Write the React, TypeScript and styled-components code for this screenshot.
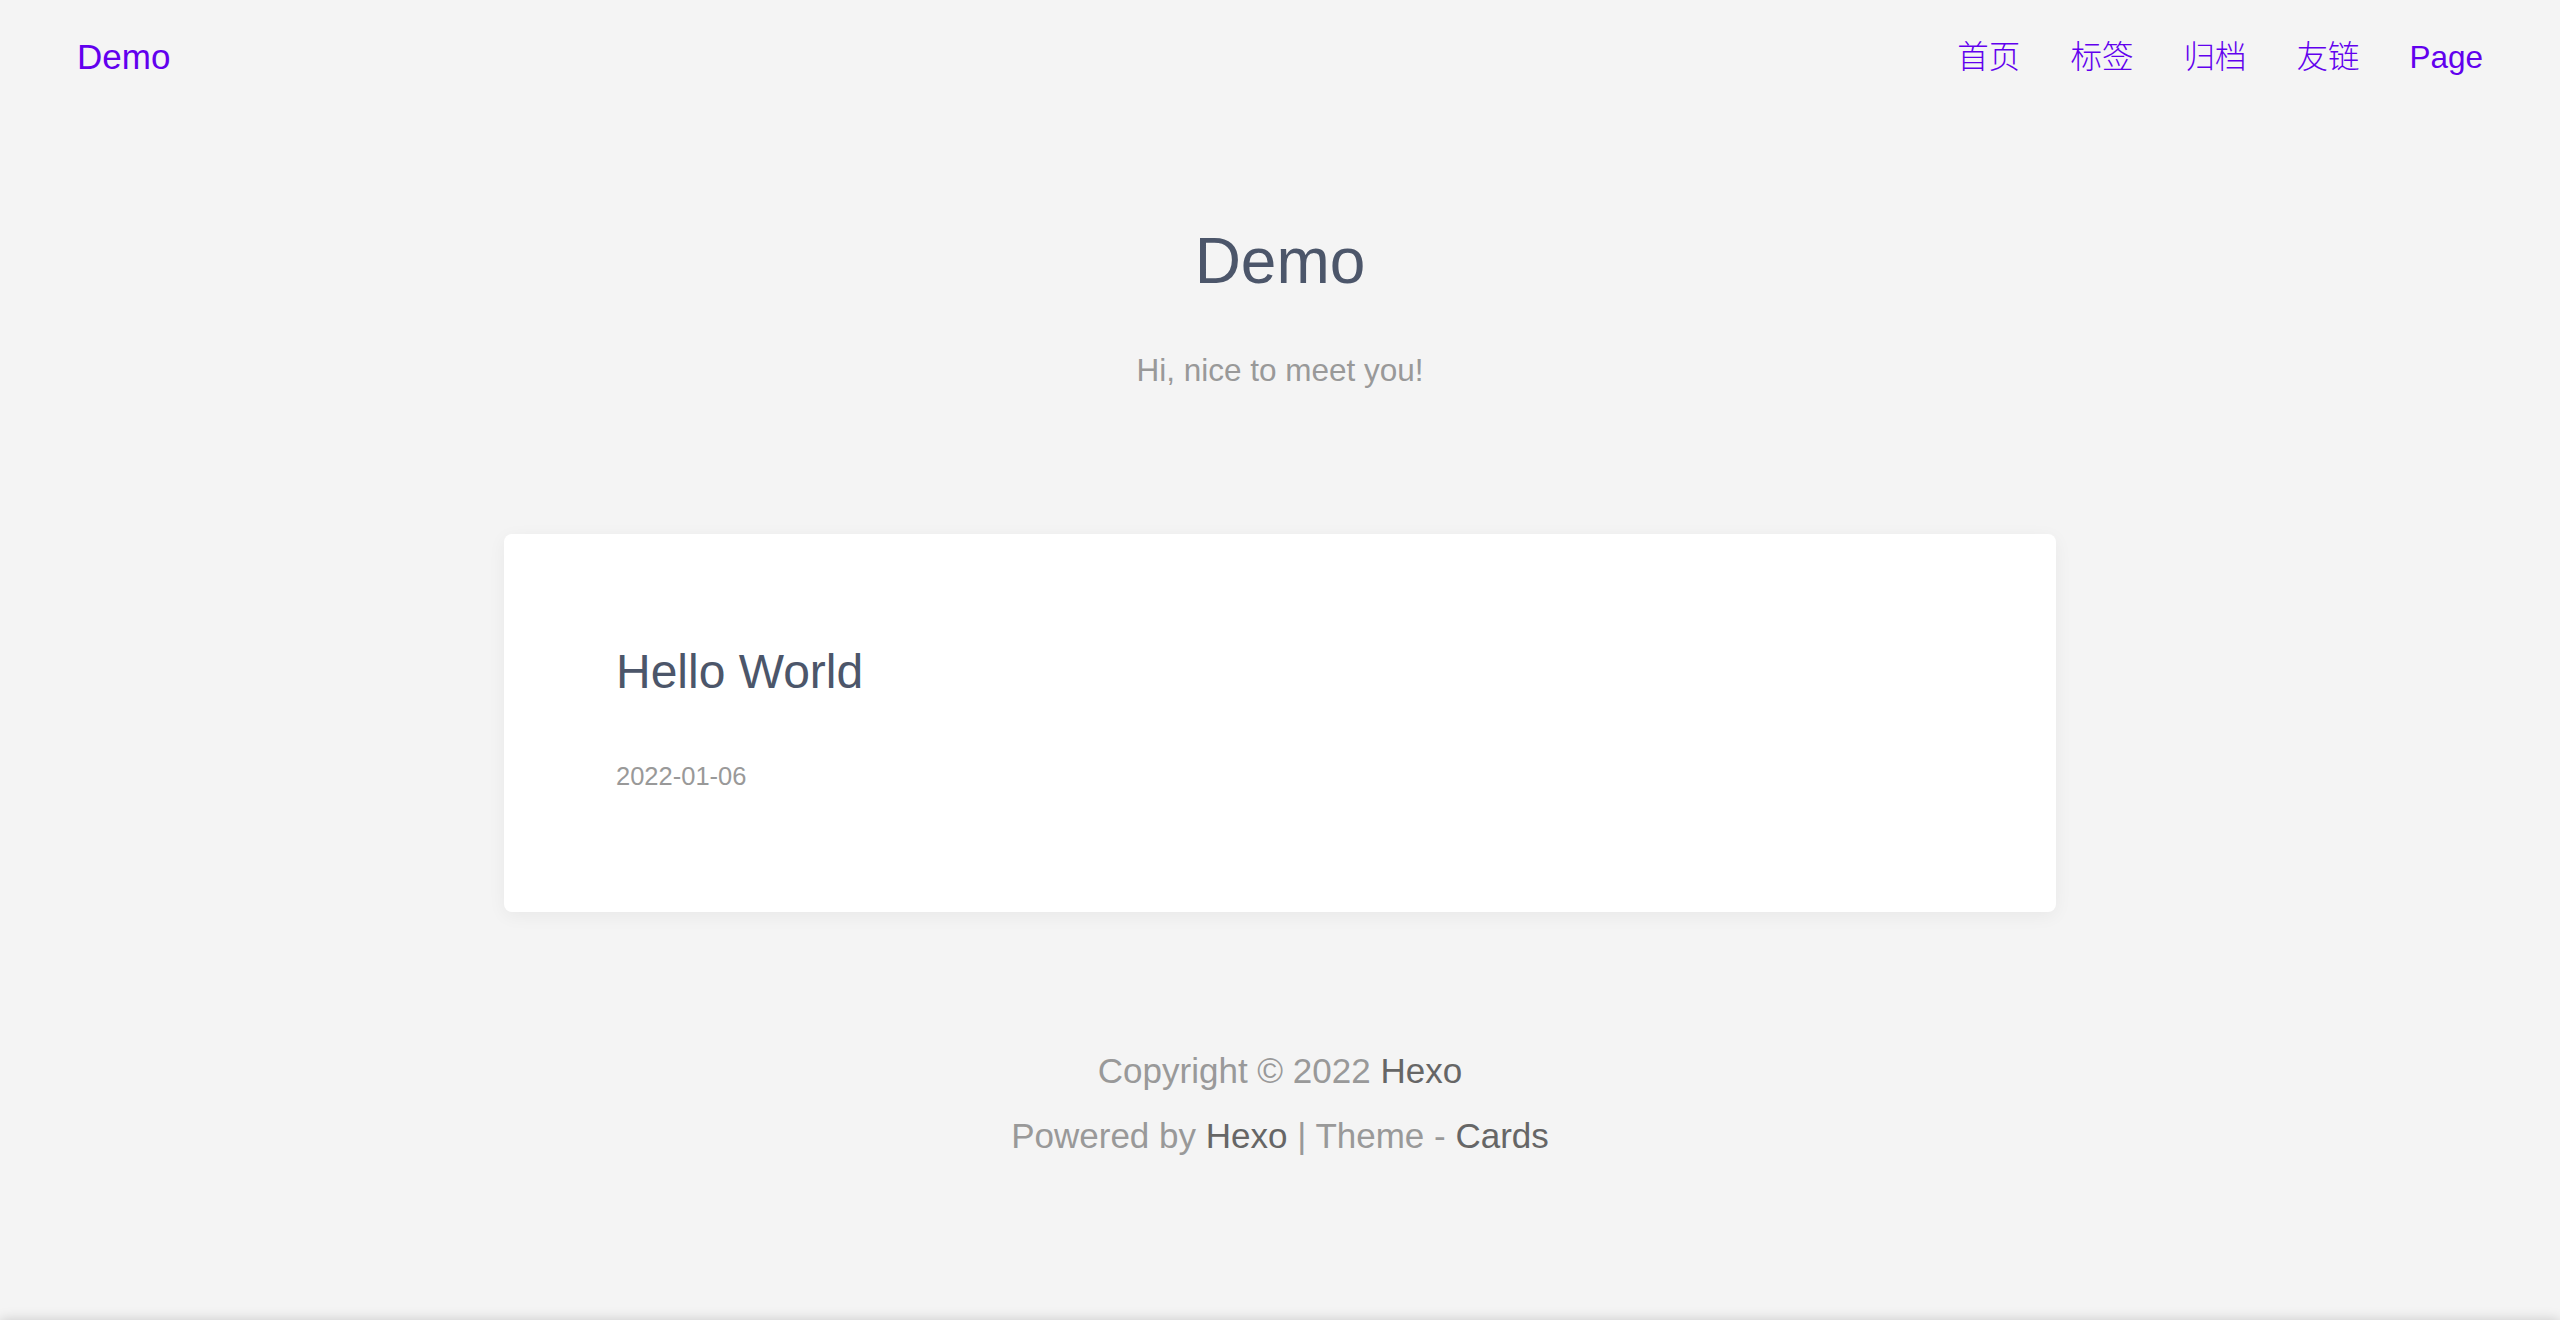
import React from 'react';
import styled, { createGlobalStyle } from 'styled-components';

const GlobalStyle = createGlobalStyle`
  html, body {
    margin: 0;
    padding: 0;
    background: #f4f4f4;
    font-family: "Liberation Sans", Arial, "Noto Sans CJK SC", sans-serif;
  }
  a {
    text-decoration: none;
    color: inherit;
  }
`;

const Page = styled.div`
  min-height: 1320px;
  display: flex;
  flex-direction: column;
`;

const Header = styled.header`
  height: 114px;
  padding: 0 77px;
  display: flex;
  align-items: center;
  justify-content: space-between;
`;

const Logo = styled.a`
  font-size: 35px;
  line-height: 40px;
  color: #6200ee;
`;

const Nav = styled.nav`
  display: flex;
  align-items: baseline;
  gap: 50px;
`;

const NavLink = styled.a`
  font-size: 31.5px;
  line-height: 40px;
  font-weight: 300;
  color: #6200ee;
  font-family: "Liberation Sans", "Noto Sans CJK SC", sans-serif;
`;

const Hero = styled.section`
  padding-top: 109px;
  display: flex;
  flex-direction: column;
  align-items: center;
`;

const SiteTitle = styled.h1`
  margin: 0;
  font-size: 64px;
  line-height: 77px;
  font-weight: 400;
  color: #4c566a;
`;

const Subtitle = styled.p`
  margin: 47px 0 0;
  font-size: 31.5px;
  line-height: 47px;
  color: #999;
`;

const Main = styled.main`
  width: 1552px;
  margin: 140px auto 0;
`;

const Card = styled.article`
  background: #fff;
  border-radius: 8px;
  box-shadow: 0 4px 18px rgba(0, 0, 0, 0.05);
  padding: 109px 112px 117px;
`;

const PostTitle = styled.h2`
  margin: 0;
  font-size: 48px;
  line-height: 57px;
  font-weight: 400;
  color: #4c566a;
`;

const PostDate = styled.div`
  margin-top: 57px;
  font-size: 25.5px;
  line-height: 38px;
  color: #999;
`;

const Footer = styled.footer`
  margin-top: 126px;
  text-align: center;
  font-size: 35px;
  line-height: 65px;
  color: #999;
`;

const FooterLink = styled.a`
  color: #666;
`;

const Spacer = styled.div`
  flex: 1;
`;

const BottomBar = styled.div`
  height: 40px;
  background: #f4f4f4;
  box-shadow: 0 0 12px rgba(0, 0, 0, 0.18);
`;

const navItems = ['首页', '标签', '归档', '友链', 'Page'];

const App: React.FC = () => {
  return (
    <>
      <GlobalStyle />
      <Page>
        <Header>
          <Logo href="#">Demo</Logo>
          <Nav>
            {navItems.map((item) => (
              <NavLink key={item} href="#">
                {item}
              </NavLink>
            ))}
          </Nav>
        </Header>
        <Hero>
          <SiteTitle>Demo</SiteTitle>
          <Subtitle>Hi, nice to meet you!</Subtitle>
        </Hero>
        <Main>
          <Card>
            <PostTitle>Hello World</PostTitle>
            <PostDate>2022-01-06</PostDate>
          </Card>
        </Main>
        <Footer>
          <div>
            Copyright © 2022 <FooterLink href="#">Hexo</FooterLink>
          </div>
          <div>
            Powered by <FooterLink href="#">Hexo</FooterLink> | Theme -{' '}
            <FooterLink href="#">Cards</FooterLink>
          </div>
        </Footer>
        <Spacer />
      </Page>
      <BottomBar />
    </>
  );
};

export default App;
